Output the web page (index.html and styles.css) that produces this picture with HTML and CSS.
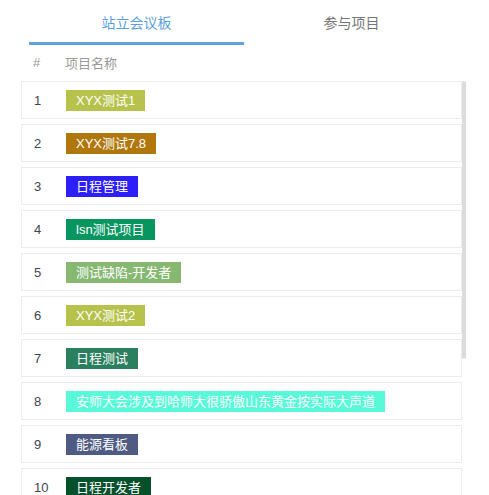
FILE: index.html
```html
<!DOCTYPE html>
<html lang="zh-CN">
<head>
<meta charset="utf-8">
<title>站立会议板</title>
<link rel="stylesheet" href="styles.css">
</head>
<body>
<div class="page">
  <div class="tabs">
    <div class="tab active">站立会议板</div>
    <div class="tab">参与项目</div>
  </div>
  <div class="head">
    <span class="col-num">#</span>
    <span class="col-name">项目名称</span>
  </div>
  <div class="list-wrap">
    <div class="list">
      <div class="row"><span class="col-num">1</span><span class="tag c1">XYX测试1</span></div>
      <div class="row"><span class="col-num">2</span><span class="tag c2">XYX测试7.8</span></div>
      <div class="row"><span class="col-num">3</span><span class="tag c3">日程管理</span></div>
      <div class="row"><span class="col-num">4</span><span class="tag c4">lsn测试项目</span></div>
      <div class="row"><span class="col-num">5</span><span class="tag c5">测试缺陷-开发者</span></div>
      <div class="row"><span class="col-num">6</span><span class="tag c1">XYX测试2</span></div>
      <div class="row"><span class="col-num">7</span><span class="tag c7">日程测试</span></div>
      <div class="row"><span class="col-num">8</span><span class="tag c8">安师大会涉及到哈师大很骄傲山东黄金按实际大声道</span></div>
      <div class="row"><span class="col-num">9</span><span class="tag c9">能源看板</span></div>
      <div class="row"><span class="col-num">10</span><span class="tag c10">日程开发者</span></div>
    </div>
    <div class="scrollbar"><div class="thumb"></div></div>
  </div>
</div>
</body>
</html>
```
FILE: styles.css
```css
* { box-sizing: border-box; }
html, body { margin: 0; padding: 0; background: #fff; }
body {
  font-family: "Liberation Sans", "Noto Sans CJK SC", sans-serif;
  color: #444;
  overflow: hidden;
}
.page {
  padding-left: 21px;
  width: 489px;
  height: 495px;
  overflow: hidden;
}
.tabs {
  display: flex;
  margin-left: 8px;
  width: 430px;
}
.tab {
  flex: 1;
  text-align: center;
  font-size: 14px;
  line-height: 20px;
  padding-top: 13px;
  padding-bottom: 9px;
  color: #777;
  border-bottom: 3px solid transparent;
}
.tab.active {
  color: #5b9fe0;
  border-bottom-color: #5ea3df;
}
.head {
  display: flex;
  align-items: center;
  height: 36px;
  padding-left: 12px;
  padding-bottom: 2px;
  font-size: 13px;
  color: #999;
}
.col-num {
  width: 32px;
  flex: none;
}
.list-wrap {
  display: flex;
  align-items: flex-start;
  height: 414px;
  overflow: hidden;
}
.list {
  width: 441px;
  flex: none;
}
.scrollbar {
  width: 4px;
  flex: none;
}
.thumb {
  height: 278px;
  background: #dcdcdc;
  border-radius: 2px;
}
.row {
  display: flex;
  align-items: center;
  height: 38px;
  margin-bottom: 5px;
  border: 1px solid #ececec;
  padding-left: 12px;
  font-size: 13px;
  color: #3f4350;
}
.tag {
  display: inline-block;
  height: 21px;
  line-height: 21px;
  padding: 0 10px;
  color: #fff;
  font-size: 13px;
  white-space: nowrap;
}
.c1 { background: #b6c24c; }
.c2 { background: #b0780c; }
.c3 { background: #2c1ffa; }
.c4 { background: #089660; }
.c5 { background: #86b872; }
.c7 { background: #2a7f5e; }
.c8 { background: #58f9d8; }
.c9 { background: #4f5b82; }
.c10 { background: #07502c; }
```
